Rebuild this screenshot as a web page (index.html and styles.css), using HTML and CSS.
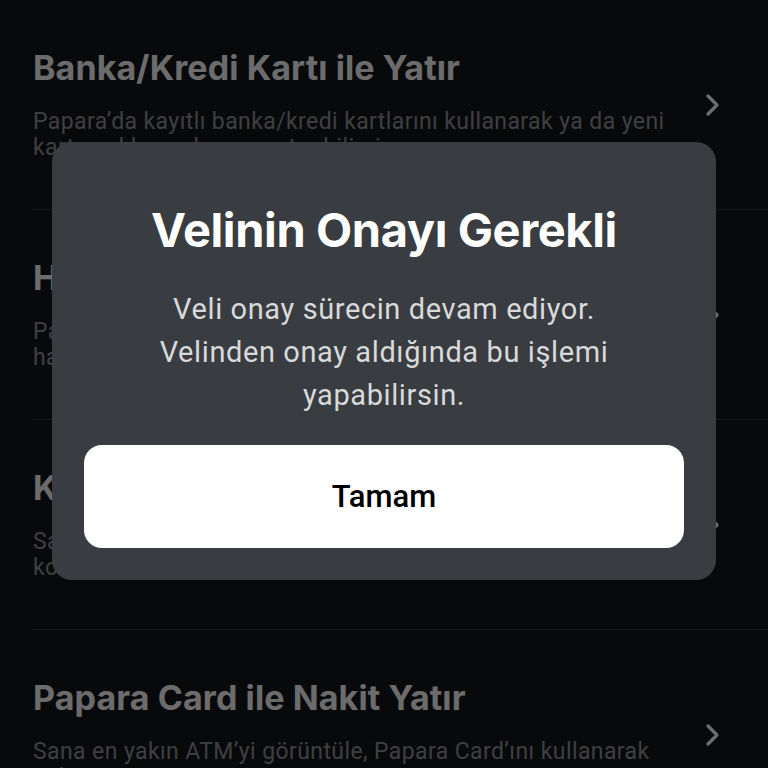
FILE: index.html
```html
<!DOCTYPE html>
<html lang="tr">
<head>
<meta charset="utf-8">
<title>Para Yatır</title>
<link rel="stylesheet" href="styles.css">
</head>
<body>
<main class="list">
  <div class="item">
    <div class="item-text">
      <h2 class="item-title">Banka/Kredi Kartı ile Yatır</h2>
      <p class="item-desc">Papara’da kayıtlı banka/kredi kartlarını kullanarak ya da yeni kartını ekleyerek para yatırabilirsin.</p>
    </div>
    <svg class="chev" viewBox="0 0 16 24" width="16" height="24"><path d="M3 3 L12 12 L3 21" fill="none" stroke="currentColor" stroke-width="3.2" stroke-linecap="round" stroke-linejoin="round"/></svg>
  </div>
  <div class="item">
    <div class="item-text">
      <h2 class="item-title">Havale/EFT ile Yatır</h2>
      <p class="item-desc">Papara hesap numaranı kullanarak bankandaki hesabından havale/EFT ile para yatırabilirsin.</p>
    </div>
    <svg class="chev" viewBox="0 0 16 24" width="16" height="24"><path d="M3 3 L12 12 L3 21" fill="none" stroke="currentColor" stroke-width="3.2" stroke-linecap="round" stroke-linejoin="round"/></svg>
  </div>
  <div class="item">
    <div class="item-text">
      <h2 class="item-title">Kiosk ile Nakit Yatır</h2>
      <p class="item-desc">Sana en yakın Papara Kiosk’u bul, nakit para yatırma işlemini kolayca gerçekleştir.</p>
    </div>
    <svg class="chev" viewBox="0 0 16 24" width="16" height="24"><path d="M3 3 L12 12 L3 21" fill="none" stroke="currentColor" stroke-width="3.2" stroke-linecap="round" stroke-linejoin="round"/></svg>
  </div>
  <div class="item">
    <div class="item-text">
      <h2 class="item-title">Papara Card ile Nakit Yatır</h2>
      <p class="item-desc">Sana en yakın ATM’yi görüntüle, Papara Card’ını kullanarak nakit para yatır.</p>
    </div>
    <svg class="chev" viewBox="0 0 16 24" width="16" height="24"><path d="M3 3 L12 12 L3 21" fill="none" stroke="currentColor" stroke-width="3.2" stroke-linecap="round" stroke-linejoin="round"/></svg>
  </div>
</main>
<div class="scrim">
  <div class="dialog" role="dialog">
    <h1 class="dialog-title">Velinin Onayı Gerekli</h1>
    <p class="dialog-body">Veli onay sürecin devam ediyor.<br>Velinden onay aldığında bu işlemi<br>yapabilirsin.</p>
    <button class="dialog-btn">Tamam</button>
  </div>
</div>
</body>
</html>
```
FILE: styles.css
```css
* { box-sizing: border-box; }
html, body {
  margin: 0;
  padding: 0;
  width: 768px;
  height: 768px;
  overflow: hidden;
  background: #121418;
}
.list {
  display: flex;
  flex-direction: column;
}
.item {
  display: flex;
  align-items: center;
  margin-left: 32px;
  padding: 48px 47px 48px 1px;
  border-bottom: 1px solid #34373c;
}
.item-text {
  flex: 1;
  min-width: 0;
}
.item-title {
  margin: 0;
  font-family: Inter, "Noto Sans", sans-serif;
  font-weight: 700;
  font-size: 34px;
  line-height: 40px;
  letter-spacing: 0.1px;
  color: #f0f0f0;
  white-space: nowrap;
}
.item-desc {
  margin: 21px 0 0;
  font-family: Roboto, "Noto Sans", sans-serif;
  font-size: 23px;
  line-height: 26px;
  letter-spacing: 0.4px;
  color: #8a8d92;
  max-width: 640px;
}
.chev {
  color: #f4f4f4;
  flex: none;
  margin-left: 16px;
}
.scrim {
  position: fixed;
  inset: 0;
  background: rgba(0, 0, 0, 0.55);
  display: flex;
  justify-content: center;
  align-items: flex-start;
  padding-top: 142px;
}
.dialog {
  width: 664px;
  background: #393c40;
  border-radius: 20px;
  padding: 64px 32px 32px;
  display: flex;
  flex-direction: column;
  align-items: center;
}
.dialog-title {
  margin: 0;
  font-family: Inter, "Noto Sans", sans-serif;
  font-weight: 700;
  font-size: 47px;
  line-height: 48px;
  letter-spacing: -0.4px;
  color: #ffffff;
  text-align: center;
}
.dialog-body {
  margin: 34px 0 0;
  font-family: Roboto, "Noto Sans", sans-serif;
  font-size: 29px;
  line-height: 43px;
  letter-spacing: 0.6px;
  color: #d8d9da;
  text-align: center;
}
.dialog-btn {
  margin-top: 28px;
  width: 100%;
  height: 103px;
  border: none;
  border-radius: 18px;
  background: #ffffff;
  font-family: Roboto, "Noto Sans", sans-serif;
  font-weight: 500;
  font-size: 31px;
  color: #000000;
}
```
